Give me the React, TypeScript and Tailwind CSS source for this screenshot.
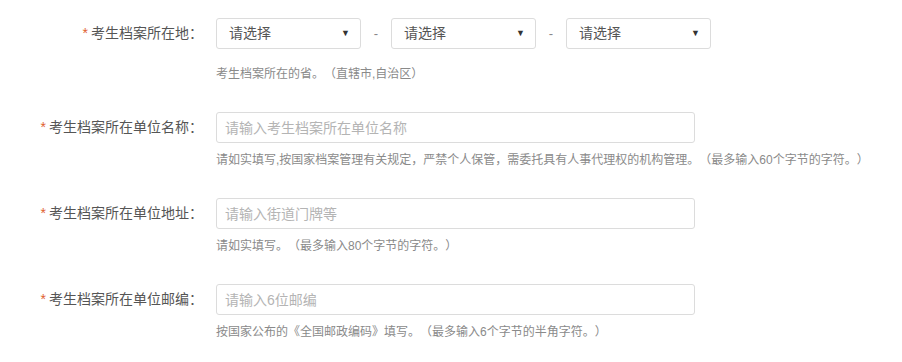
const FONT = "font-['Liberation_Sans','Noto_Sans_CJK_SC',sans-serif]";

type Field = {
  label: string;
  placeholder: string;
  help: string;
};

const FIELDS: Field[] = [
  {
    label: "考生档案所在单位名称：",
    placeholder: "请输入考生档案所在单位名称",
    help: "请如实填写,按国家档案管理有关规定，严禁个人保管，需委托具有人事代理权的机构管理。（最多输入60个字节的字符。）",
  },
  {
    label: "考生档案所在单位地址：",
    placeholder: "请输入街道门牌等",
    help: "请如实填写。（最多输入80个字节的字符。）",
  },
  {
    label: "考生档案所在单位邮编：",
    placeholder: "请输入6位邮编",
    help: "按国家公布的《全国邮政编码》填写。（最多输入6个字节的半角字符。）",
  },
];

function Label({ text }: { text: string }) {
  return (
    <div className="w-[203px] shrink-0 h-[31px] flex items-center justify-end text-[14px] text-[#555]">
      <span className="text-[#e0622f] mr-[3px]">*</span>
      {text}
    </div>
  );
}

function FakeSelect() {
  return (
    <div className="w-[145px] h-[31px] border border-[#dcdcdc] rounded-[3px] bg-white flex items-center justify-between pl-3 pr-[10px] text-[14px] text-[#555]">
      <span>请选择</span>
      <span className="text-[9px] text-[#333]">▼</span>
    </div>
  );
}

export default function App() {
  return (
    <div className={`w-[902px] h-[362px] bg-white overflow-hidden pt-[18px] [text-spacing-trim:space-all] ${FONT}`}>
      {/* 所在地 */}
      <div className="flex gap-[13px] mb-[29px]">
        <Label text="考生档案所在地：" />
        <div>
          <div className="flex items-center">
            <FakeSelect />
            <span className="w-[30px] text-center text-[13px] text-[#888]">-</span>
            <FakeSelect />
            <span className="w-[30px] text-center text-[13px] text-[#888]">-</span>
            <FakeSelect />
          </div>
          <p className="mt-4 text-[12px] leading-[18px] text-[#8a8a8a]">
            考生档案所在的省。（直辖市,自治区）
          </p>
        </div>
      </div>

      {FIELDS.map((f) => (
        <div key={f.label} className="flex gap-[13px] mb-[29px]">
          <Label text={f.label} />
          <div>
            <input
              className="w-[479px] h-[31px] border border-[#dcdcdc] rounded-[3px] px-2 text-[14px] text-[#555] placeholder:text-[#b4b4b4] outline-none"
              placeholder={f.placeholder}
            />
            <p className="mt-2 text-[12px] leading-[18px] text-[#8a8a8a] whitespace-nowrap">
              {f.help}
            </p>
          </div>
        </div>
      ))}
    </div>
  );
}
